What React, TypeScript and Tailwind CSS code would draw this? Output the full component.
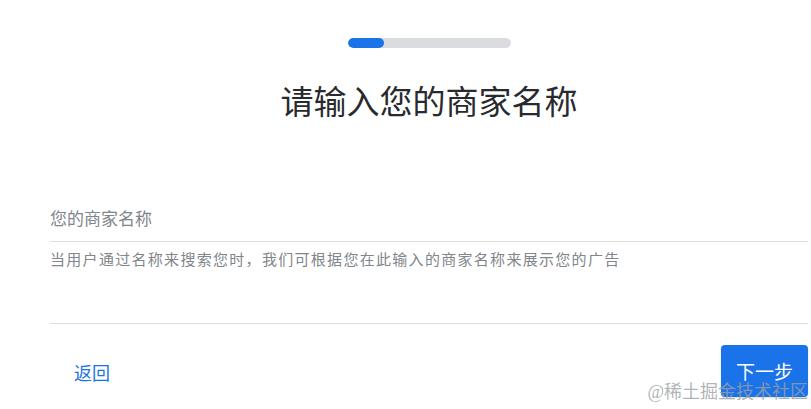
export default function App() {
  return (
    <div
      className="relative w-[811px] h-[409px] overflow-hidden bg-white"
      style={{ fontFamily: '"Noto Sans CJK SC", "Noto Sans", sans-serif' }}
    >
      <div className="pl-[50px] pr-[3px]">
        {/* Progress */}
        <div className="flex justify-center pt-[38px]">
          <div className="w-[163px] h-[10px] rounded-full bg-[#dadce0] overflow-hidden">
            <div className="w-[36px] h-full rounded-full bg-[#1a73e8]" />
          </div>
        </div>

        <h1 className="mt-[30px] text-center text-[33px] leading-[44px] text-[#292a2d]">
          请输入您的商家名称
        </h1>

        {/* Field */}
        <div className="mt-[84px] border-b border-[#e0e0e0] pb-[11px] text-[17px] leading-[24px] text-[#80868b]">
          您的商家名称
        </div>
        <p className="mt-[6px] text-[15px] leading-[22px] text-[#80868b] tracking-[1.3px]">
          当用户通过名称来搜索您时，我们可根据您在此输入的商家名称来展示您的广告
        </p>
        <div className="mt-[53px] border-t border-[#dadce0]" />

        <div className="flex items-start justify-between mt-[21px]">
          <button className="mt-[14px] px-[24px] text-[18px] leading-[26px] text-[#1a73e8]">
            返回
          </button>
          <button className="w-[87px] h-[52px] rounded-[4px] bg-[#1a73e8] text-white text-[19px] shadow-sm">
            下一步
          </button>
        </div>
      </div>

      {/* watermark */}
      <div
        className="absolute right-[3px] top-[380px] text-[18px] leading-[24px] text-[#9aa0a6]/80"
        style={{ fontFamily: '"Liberation Serif", "Noto Sans CJK SC", serif' }}
      >
        @稀土掘金技术社区
      </div>
    </div>
  );
}
